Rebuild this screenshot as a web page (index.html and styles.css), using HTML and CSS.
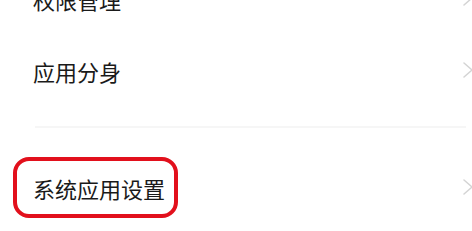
FILE: index.html
```html
<!DOCTYPE html>
<html lang="zh-CN">
  <head>
    <meta charset="UTF-8" />
    <meta name="viewport" content="width=device-width, initial-scale=1.0" />
    <title>设置</title>
    <link rel="stylesheet" href="styles.css">
  </head>
  <body>
    <div class="list list-top">
      <div class="row">
        <span class="label">权限管理</span>
        <svg class="chevron" width="10" height="16" viewBox="0 0 10 16"><polyline points="1,1 9,8 1,15" /></svg>
      </div>
      <div class="row">
        <span class="label">应用分身</span>
        <svg class="chevron" width="10" height="16" viewBox="0 0 10 16"><polyline points="1,1 9,8 1,15" /></svg>
      </div>
    </div>

    <div class="divider"></div>

    <div class="list">
      <div class="row row-marked">
        <!-- red annotation ring -->
        <span class="mark"></span>
        <span class="label">系统应用设置</span>
        <svg class="chevron" width="10" height="16" viewBox="0 0 10 16"><polyline points="1,1 9,8 1,15" /></svg>
      </div>
    </div>
  </body>
</html>
```

FILE: styles.css
```css
* {
  margin: 0;
  padding: 0;
  box-sizing: border-box;
}

body {
  background: #ffffff;
  font-family: "Noto Sans CJK SC", "Noto Sans", sans-serif;
  color: #1a1a1a;
  overflow: hidden;
}

.list-top {
  margin-top: -37px;
}

/* Row styling */
.row {
  display: flex;
  align-items: center;
  justify-content: space-between;
  height: 72px;
  padding-left: 33px;
}
.label {
  font-size: 22px;
  line-height: 1;
}
.chevron {
  margin-right: -1px;
  margin-top: -3px;
}
.chevron polyline {
  fill: none;
  stroke: #d4d4d4;
  stroke-width: 1.5;
  stroke-linecap: round;
  stroke-linejoin: round;
}

.divider {
  height: 2px;
  margin: 19px 6px 24px 35px;
  background: #f6f6f6;
}

/* Annotation */
.row-marked {
  position: relative;
}
.mark {
  position: absolute;
  left: 13px;
  top: 5px;
  width: 165px;
  height: 61px;
  border: 4px solid #e2101c;
  border-radius: 16px;
}
```
